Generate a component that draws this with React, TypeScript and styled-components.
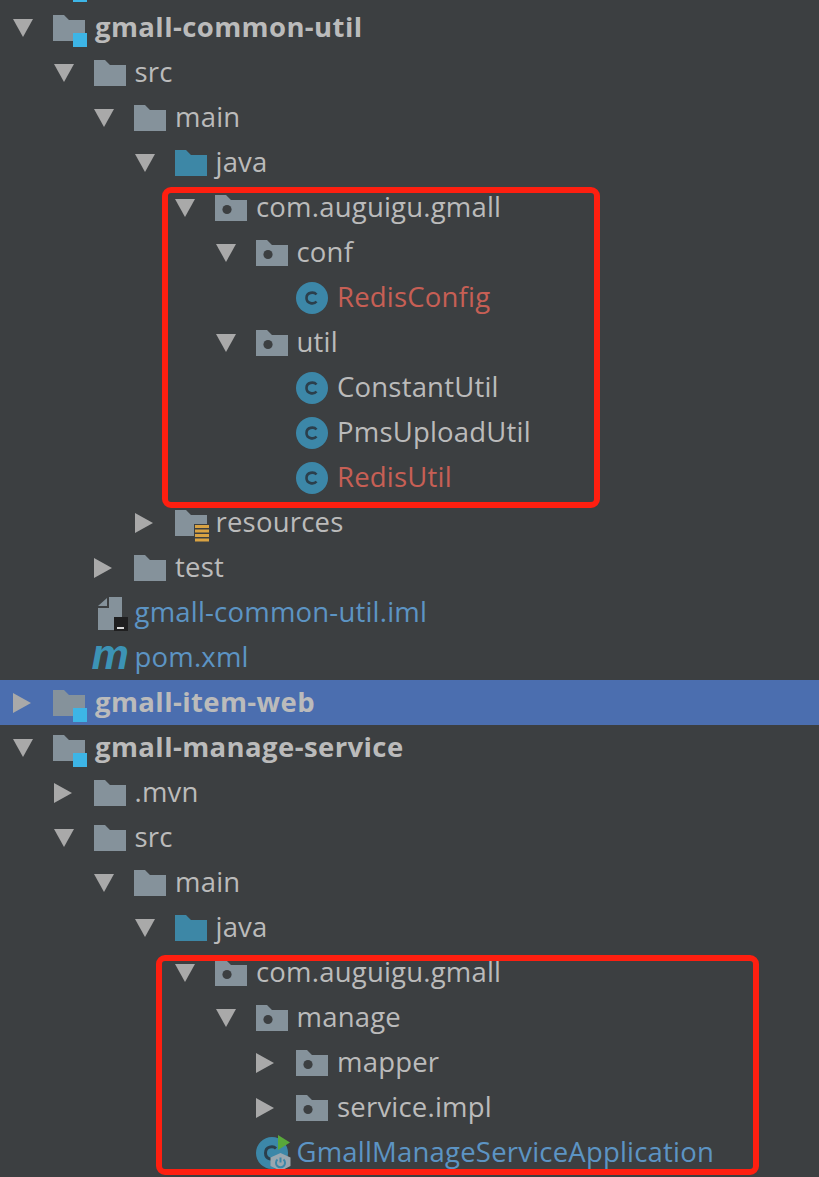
import React from 'react';
import styled, { createGlobalStyle } from 'styled-components';

const GlobalStyle = createGlobalStyle`
  html, body {
    margin: 0;
    padding: 0;
    background: #3c3f41;
  }
`;

type Tone = 'plain' | 'red' | 'blue';
type IconKind = 'module' | 'folder' | 'source' | 'package' | 'resources' | 'class' | 'iml' | 'maven' | 'boot';
type Expand = 'open' | 'closed' | 'none';

interface Node {
  depth: number;
  label: string;
  icon: IconKind;
  expand: Expand;
  tone?: Tone;
  bold?: boolean;
  selected?: boolean;
}

const nodes: Node[] = [
  { depth: 0, label: 'gmall-common-util', icon: 'module', expand: 'open', bold: true },
  { depth: 1, label: 'src', icon: 'folder', expand: 'open' },
  { depth: 2, label: 'main', icon: 'folder', expand: 'open' },
  { depth: 3, label: 'java', icon: 'source', expand: 'open' },
  { depth: 4, label: 'com.auguigu.gmall', icon: 'package', expand: 'open' },
  { depth: 5, label: 'conf', icon: 'package', expand: 'open' },
  { depth: 6, label: 'RedisConfig', icon: 'class', expand: 'none', tone: 'red' },
  { depth: 5, label: 'util', icon: 'package', expand: 'open' },
  { depth: 6, label: 'ConstantUtil', icon: 'class', expand: 'none' },
  { depth: 6, label: 'PmsUploadUtil', icon: 'class', expand: 'none' },
  { depth: 6, label: 'RedisUtil', icon: 'class', expand: 'none', tone: 'red' },
  { depth: 3, label: 'resources', icon: 'resources', expand: 'closed' },
  { depth: 2, label: 'test', icon: 'folder', expand: 'closed' },
  { depth: 1, label: 'gmall-common-util.iml', icon: 'iml', expand: 'none', tone: 'blue' },
  { depth: 1, label: 'pom.xml', icon: 'maven', expand: 'none', tone: 'blue' },
  { depth: 0, label: 'gmall-item-web', icon: 'module', expand: 'closed', bold: true, selected: true },
  { depth: 0, label: 'gmall-manage-service', icon: 'module', expand: 'open', bold: true },
  { depth: 1, label: '.mvn', icon: 'folder', expand: 'closed' },
  { depth: 1, label: 'src', icon: 'folder', expand: 'open' },
  { depth: 2, label: 'main', icon: 'folder', expand: 'open' },
  { depth: 3, label: 'java', icon: 'source', expand: 'open' },
  { depth: 4, label: 'com.auguigu.gmall', icon: 'package', expand: 'open' },
  { depth: 5, label: 'manage', icon: 'package', expand: 'open' },
  { depth: 6, label: 'mapper', icon: 'package', expand: 'closed' },
  { depth: 6, label: 'service.impl', icon: 'package', expand: 'closed' },
  { depth: 5, label: 'GmallManageServiceApplication', icon: 'boot', expand: 'none', tone: 'blue' },
];

const toneColors: Record<Tone, string> = {
  plain: '#bbbbbb',
  red: '#c75f55',
  blue: '#5c94c4',
};

const FOLDER = 'M0 0H11L16 5H32V26H0Z';

const Tree = styled.div`
  position: relative;
  width: 819px;
  height: 1177px;
  overflow: hidden;
  background: #3c3f41;
  font-family: "Open Sans", "Noto Sans", sans-serif;
`;

const TopSliver = styled.div`
  height: 5px;
  padding-left: 73px;

  &::before {
    content: '';
    display: block;
    width: 14px;
    height: 2px;
    background: #3db5e6;
  }
`;

const Row = styled.div<{ $depth: number; $selected?: boolean }>`
  display: flex;
  align-items: center;
  height: 45px;
  padding-left: ${(p) => 13 + p.$depth * 40.5}px;
  background: ${(p) => (p.$selected ? '#4b6eaf' : 'transparent')};
`;

const ArrowSlot = styled.div`
  flex: 0 0 40px;
  display: flex;
  align-items: center;
`;

const IconSlot = styled.div`
  flex: 0 0 41px;
  display: flex;
  align-items: center;
`;

const Label = styled.span<{ $tone: Tone; $bold?: boolean }>`
  color: ${(p) => toneColors[p.$tone]};
  font-size: 27.5px;
  font-weight: ${(p) => (p.$bold ? 700 : 400)};
  line-height: 43px;
  padding-bottom: 2px;
  margin-left: ${(p) => (p.$bold ? 1 : 0)}px;
  white-space: nowrap;
  letter-spacing: ${(p) => (p.$bold ? 0.4 : 0.2)}px;
`;

const MavenMark = styled.span`
  display: block;
  width: 34px;
  margin: -6px 0 0 -2px;
  color: #3c93b5;
  font-family: "Liberation Sans", sans-serif;
  font-size: 42px;
  font-style: italic;
  font-weight: 700;
  line-height: 34px;
`;

const Frame = styled.div<{ $left: number; $top: number; $width: number; $height: number }>`
  position: absolute;
  left: ${(p) => p.$left}px;
  top: ${(p) => p.$top}px;
  width: ${(p) => p.$width}px;
  height: ${(p) => p.$height}px;
  box-sizing: border-box;
  border: 6px solid #fe1f10;
  border-radius: 9px;
  pointer-events: none;
`;

const Arrow = ({ expand }: { expand: Expand }) => {
  if (expand === 'none') return null;
  return expand === 'open' ? (
    <svg width="20" height="18" viewBox="0 0 20 18">
      <path d="M0 0H20L10 18Z" fill="#a9a9a9" />
    </svg>
  ) : (
    <svg width="18" height="20" viewBox="0 0 18 20">
      <path d="M0 0L18 10L0 20Z" fill="#a9a9a9" />
    </svg>
  );
};

const TreeIcon = ({ kind }: { kind: IconKind }) => {
  switch (kind) {
    case 'module':
      return (
        <svg width="35" height="32" viewBox="0 0 35 32" style={{ marginTop: 6 }}>
          <path d={FOLDER} fill="#85929b" />
          <rect x="20" y="18" width="14" height="14" fill="#3db5e6" />
        </svg>
      );
    case 'folder':
      return (
        <svg width="32" height="26" viewBox="0 0 32 26">
          <path d={FOLDER} fill="#85929b" />
        </svg>
      );
    case 'source':
      return (
        <svg width="32" height="26" viewBox="0 0 32 26">
          <path d={FOLDER} fill="#3d87a6" />
        </svg>
      );
    case 'package':
      return (
        <svg width="32" height="26" viewBox="0 0 32 26">
          <path d={FOLDER} fill="#85929b" />
          <circle cx="12" cy="14.5" r="4.6" fill="#3c3f41" />
        </svg>
      );
    case 'resources':
      return (
        <svg width="35" height="33" viewBox="0 0 35 33" style={{ marginTop: 7 }}>
          <path d={FOLDER} fill="#85929b" />
          <rect x="19" y="14" width="16" height="19" fill="#3c3f41" />
          <path d="M20 16.5H34M20 21H34M20 25.5H34M20 30H34" stroke="#d9a343" strokeWidth="2.8" />
        </svg>
      );
    case 'class':
      return (
        <svg width="32" height="32" viewBox="0 0 32 32">
          <circle cx="16" cy="16" r="16" fill="#3c87a8" />
          <path d="M20.5 12.5C18 9.5 10.5 10 10.5 16C10.5 22 18 22.5 20.5 19.5" fill="none" stroke="#2b3f4c" strokeWidth="2.6" />
        </svg>
      );
    case 'iml':
      return (
        <svg width="30" height="34" viewBox="0 0 30 34" style={{ margin: '3px 0 0 4px' }}>
          <path d="M11 0H24V20H16V33H0V11H11Z" fill="#85929b" />
          <path d="M9 1V9H0Z" fill="#85929b" />
          <rect x="16" y="20" width="14" height="14" fill="#1f1f20" />
          <rect x="19" y="30" width="7" height="2" fill="#d8d8d8" />
        </svg>
      );
    case 'maven':
      return <MavenMark>m</MavenMark>;
    case 'boot':
      return (
        <svg width="36" height="36" viewBox="0 0 36 36" style={{ marginTop: 1 }}>
          <circle cx="16" cy="18" r="16" fill="#3c87a8" />
          <path d="M20 13.5C17 10.5 9.5 11.5 9.5 18C9.5 24.5 17 25.5 20 22.5" fill="none" stroke="#2b3f4c" strokeWidth="3" />
          <path d="M22 0L34 7.5L22 15Z" fill="#59a83a" />
          <path d="M24.5 18L34.5 22.5V31L24.5 36L14.5 31V22.5Z" fill="#9aa7b0" />
          <path d="M21.5 24.5A4.5 4.5 0 1 0 27.5 24.5" fill="none" stroke="#3c87a8" strokeWidth="2" />
          <path d="M24.5 22.5V27.5" stroke="#3c87a8" strokeWidth="2" />
        </svg>
      );
  }
};

const App: React.FC = () => (
  <>
    <GlobalStyle />
    <Tree>
      <TopSliver />
      {nodes.map((node, i) => (
        <Row key={i} $depth={node.depth} $selected={node.selected}>
          <ArrowSlot>
            <Arrow expand={node.expand} />
          </ArrowSlot>
          <IconSlot>
            <TreeIcon kind={node.icon} />
          </IconSlot>
          <Label $tone={node.tone ?? 'plain'} $bold={node.bold}>
            {node.label}
          </Label>
        </Row>
      ))}
      <Frame $left={162} $top={187} $width={438} $height={321} />
      <Frame $left={156} $top={955} $width={603} $height={220} />
    </Tree>
  </>
);

export default App;
